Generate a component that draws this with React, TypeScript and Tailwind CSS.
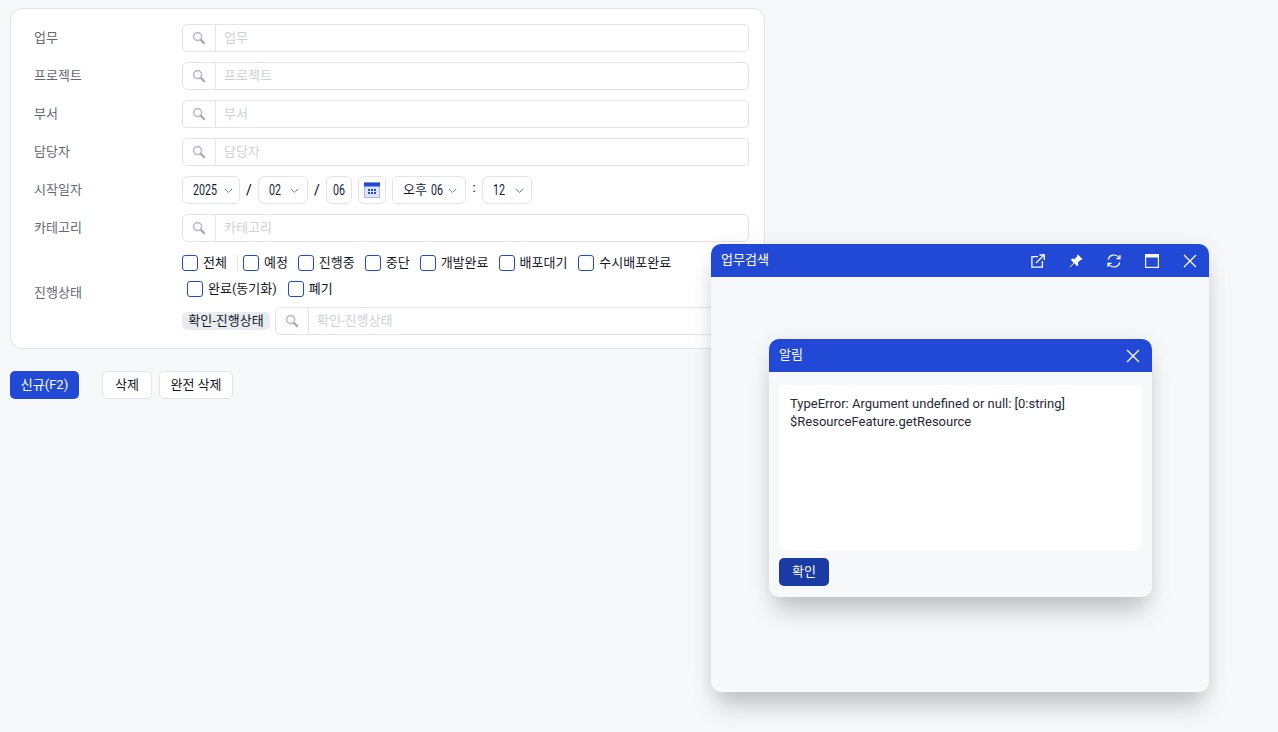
import React from "react";

function SearchIcon() {
  return (
    <svg width="14" height="14" viewBox="0 0 14 14" fill="none" className="shrink-0">
      <circle cx="5.6" cy="5.6" r="4" stroke="#b9c1cc" strokeWidth="1.7" />
      <path d="M8.6 8.6L12.8 12.8" stroke="#a9a9a9" strokeWidth="2.2" />
    </svg>
  );
}
function SearchInput({ placeholder, className = "" }: { placeholder: string; className?: string }) {
  return (
    <div className={"flex h-[28px] items-center rounded-[5px] border border-[#e2e4ea] bg-white " + className}>
      <div className="flex h-full w-[33px] shrink-0 items-center justify-center border-r border-[#e2e4ea]">
        <SearchIcon />
      </div>
      <div className="pl-[8px] text-[#cfd1d6]">{placeholder}</div>
    </div>
  );
}
function Chevron() {
  return (
    <svg width="9" height="6" viewBox="0 0 9 6" fill="none" className="mt-[2px] shrink-0">
      <path d="M0.8 0.8L4.5 4.5L8.2 0.8" stroke="#6f84a6" strokeWidth="1" />
    </svg>
  );
}
function Num({ children, w }: { children: string; w: string }) {
  return (
    <span className={"inline-block shrink-0 origin-left scale-x-[0.76] text-[14px] " + w}>{children}</span>
  );
}
function Select({ w, children, gap }: { w: string; children: React.ReactNode; gap: string }) {
  return (
    <div className={"flex h-[28px] items-center rounded-[6px] border border-[#e2e4ea] bg-white pl-[10px] text-[#0f1b3d] " + w + " " + gap}>
      <span className="flex items-center">{children}</span>
      <Chevron />
    </div>
  );
}
function Row({ label, lift = "", children }: { label: string; lift?: string; children: React.ReactNode }) {
  return (
    <div className="flex items-center">
      <div className={"w-[148px] shrink-0 text-[#636879] " + lift}>{label}</div>
      <div className="min-w-0 flex-1">{children}</div>
    </div>
  );
}
function Check({ label, mr = "mr-[10px]" }: { label: string; mr?: string }) {
  return (
    <div className={"flex items-center gap-[5px] text-[#111827] " + mr}>
      <span className="h-[16px] w-[16px] rounded-[3px] border border-[#2149d6] bg-white" />
      <span>{label}</span>
    </div>
  );
}
function Btn({ children, className = "" }: { children: React.ReactNode; className?: string }) {
  return (
    <div className={"flex h-[28px] items-center justify-center rounded-[5px] border border-[#e2e4ea] bg-white text-[#111827] " + className}>
      {children}
    </div>
  );
}
function CloseIcon() {
  return (
    <svg width="14" height="14" viewBox="0 0 14 14" fill="none">
      <path d="M1 1L13 13M13 1L1 13" stroke="white" strokeWidth="1.3" />
    </svg>
  );
}

export default function App() {
  return (
    <div
      className="relative h-[732px] w-[1278px] overflow-hidden bg-[#f7f8fa] text-[13px] leading-[18px]"
      style={{ fontFamily: 'Roboto,"Noto Sans CJK KR",sans-serif' }}
    >
      <div className="pl-[10px] pt-[8px]">
        <div className="w-[755px] rounded-[12px] border border-[#e2e4ea] bg-white pb-[13px] pl-[23px] pr-[15px] pt-[15px]">
          <div className="flex flex-col gap-[10px]">
            <Row label="업무"><SearchInput placeholder="업무" /></Row>
            <Row label="프로젝트"><SearchInput placeholder="프로젝트" /></Row>
            <Row label="부서"><SearchInput placeholder="부서" /></Row>
            <Row label="담당자"><SearchInput placeholder="담당자" /></Row>
            <Row label="시작일자">
              <div className="flex items-center">
                <Select w="w-[58px]" gap="gap-[7px]"><Num w="w-[24px]">2025</Num></Select>
                <span className="w-[18px] text-center text-[14px] text-black">/</span>
                <Select w="w-[50px]" gap="gap-[9px]"><Num w="w-[12px]">02</Num></Select>
                <span className="w-[18px] text-center text-[14px] text-black">/</span>
                <div className="flex h-[28px] w-[26px] items-center justify-center rounded-[6px] border border-[#e2e4ea] text-[#0f1b3d]"><Num w="w-[12px]">06</Num></div>
                <div className="ml-[6px] flex h-[28px] w-[28px] items-center justify-center rounded-[6px] border border-[#e2e4ea]">
                  <svg width="16" height="16" viewBox="0 0 16 16">
                    <rect x="0.5" y="1" width="15" height="14.5" fill="#dfe4f8" stroke="#a9b6ee" />
                    <rect x="0" y="0.5" width="16" height="4" fill="#2149d6" />
                    <path d="M4 7h2v2H4zM7 7h2v2H7zM10 7h2v2h-2zM4 10h2v2H4zM7 10h2v2H7zM10 10h2v2h-2z" fill="#2149d6" />
                  </svg>
                </div>
                <div className="ml-[6px]">
                  <Select w="w-[74px]" gap="gap-[5px]"><span className="mr-[4px]">오후</span><Num w="w-[12px]">06</Num></Select>
                </div>
                <span className="w-[16px] pb-[4px] text-center text-black">:</span>
                <Select w="w-[50px]" gap="gap-[9px]"><Num w="w-[13px]">12</Num></Select>
              </div>
            </Row>
            <Row label="카테고리"><SearchInput placeholder="카테고리" /></Row>
            <Row label="진행상태" lift="pb-[2px]">
              <div className="flex flex-col pt-[2px]">
                <div className="flex h-[18px] items-center">
                  <Check label="전체" />
                  <span className="mr-[5px] h-[16px] w-px bg-[#e2e4ea]" />
                  <Check label="예정" />
                  <Check label="진행중" />
                  <Check label="중단" />
                  <Check label="개발완료" />
                  <Check label="배포대기" mr="mr-[11px]" />
                  <Check label="수시배포완료" />
                </div>
                <div className="mt-[8px] flex h-[18px] items-center pl-[5px]">
                  <Check label="완료(동기화)" mr="mr-[11px]" />
                  <Check label="폐기" />
                </div>
                <div className="mt-[9px] flex items-center gap-[5px]">
                  <span className="flex h-[18px] w-[88px] items-center justify-center rounded-[5px] bg-[#e9ecef] text-[#111827]">확인-진행상태</span>
                  <SearchInput placeholder="확인-진행상태" className="flex-1" />
                </div>
              </div>
            </Row>
          </div>
        </div>
        <div className="mt-[22px] flex items-center">
          <div className="flex h-[28px] w-[69px] items-center justify-center rounded-[5px] bg-[#2149d6] text-white">신규(F2)</div>
          <Btn className="ml-[23px] w-[50px]">삭제</Btn>
          <Btn className="ml-[7px] w-[74px]">완전 삭제</Btn>
        </div>
      </div>

      <div className="absolute left-[711px] top-[244px] h-[448px] w-[498px] rounded-[10px] bg-[#f7f8fa] shadow-[0_0_20px_rgba(0,0,0,0.07),0_20px_25px_-6px_rgba(0,0,0,0.2)]">
        <div className="flex h-[33px] items-center justify-between rounded-t-[10px] bg-[#2149d6] pl-[10px] pr-[12px] text-white">
          <span className="pb-[1px]">업무검색</span>
          <div className="flex items-center gap-[24px]">
            <svg width="14" height="14" viewBox="0 0 14 14" fill="none" stroke="white" strokeWidth="1.3">
              <path d="M7 2.6H0.9v10.5h10.5V7" />
              <path d="M5 9L13 1" />
              <path d="M8.4 1H13.4V6" strokeWidth="1.5" />
            </svg>
            <svg width="14" height="14" viewBox="0 0 14 14" fill="white">
              <path d="M8.8 0.4L13.6 5.2L12.4 6.1L11.4 5.9L8.9 8.4L9.4 11L8.2 12.2L5.3 9.3L1 13.4L0.6 13L4.7 8.7L1.8 5.8L3 4.6L5.6 5.1L8.1 2.6L7.9 1.6Z" />
            </svg>
            <svg width="14" height="14" viewBox="0 0 14 14" fill="none" stroke="white" strokeWidth="1.2">
              <path d="M1.2 5.5A6 6 0 0 1 11.6 3.2L13 4.6M13 1v3.6H9.4" />
              <path d="M12.8 8.5A6 6 0 0 1 2.4 10.8L1 9.4M1 13V9.4h3.6" />
            </svg>
            <svg width="14" height="14" viewBox="0 0 14 14" fill="none">
              <rect x="0.6" y="0.6" width="12.8" height="12.8" stroke="white" strokeWidth="1.2" />
              <rect x="0" y="0" width="14" height="3.5" fill="white" />
            </svg>
            <CloseIcon />
          </div>
        </div>
      </div>

      <div className="absolute left-[769px] top-[339px] flex h-[258px] w-[383px] flex-col rounded-[10px] bg-[#f7f8fa] shadow-[0_0_20px_rgba(0,0,0,0.07),0_20px_25px_-6px_rgba(0,0,0,0.2)]">
        <div className="flex h-[33px] shrink-0 items-center justify-between rounded-t-[10px] bg-[#2149d6] pl-[10px] pr-[12px] text-white">
          <span className="pb-[1px]">알림</span>
          <CloseIcon />
        </div>
        <div className="mx-[10px] mt-[13px] h-[166px] rounded-b-[10px] bg-white px-[11px] pt-[10px] text-[#1f2937]">
          <div>TypeError: Argument undefined or null: [0:string]</div>
          <div>$ResourceFeature.getResource</div>
        </div>
        <div className="ml-[10px] mt-[7px] flex h-[28px] w-[50px] items-center justify-center rounded-[5px] bg-[#1a3ba3] text-white">확인</div>
      </div>
    </div>
  );
}
